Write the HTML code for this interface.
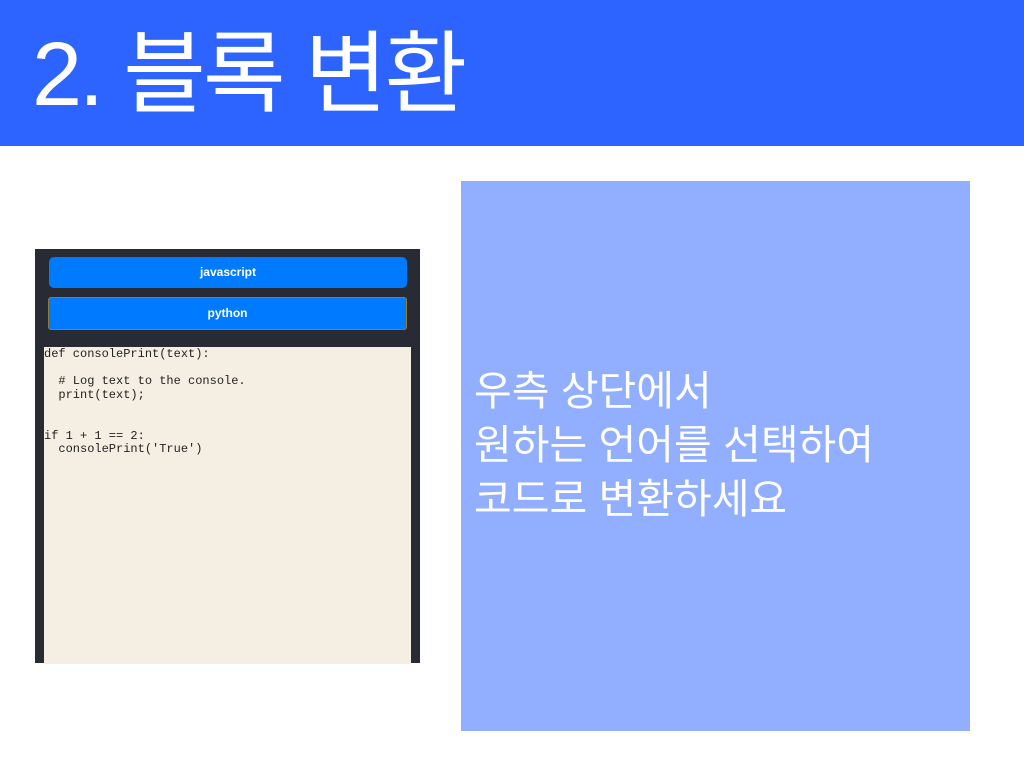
<!DOCTYPE html><html><head><meta charset="utf-8"><style>
body{margin:0;width:1024px;height:768px;position:relative;background:#fff;overflow:hidden;font-family:"Liberation Sans","Noto Sans CJK KR",sans-serif}
.hdr{position:absolute;left:0;top:0;width:1024px;height:146px;background:#2d63ff}
.t{position:absolute;left:32px;top:20px;color:#fff;font-size:90px;line-height:110px;letter-spacing:-3px;font-weight:400}
.panel{position:absolute;left:35px;top:249px;width:385px;height:414px;background:#282b33}
.btn{position:absolute;background:#007bff;color:#fff;font-size:12px;font-weight:bold;text-align:center;border-radius:5px;box-sizing:border-box}
.code{position:absolute;left:9px;top:98px;width:367px;height:316px;background:#f5efe3;font-family:"Liberation Mono",monospace;font-size:12px;line-height:13.6px;color:#222;white-space:pre;padding-top:1px}
.r{position:absolute;left:461px;top:181px;width:509px;height:550px;background:#92aeff}
.rt{position:absolute;left:13px;top:183px;color:#fff;font-size:41px;line-height:54px;letter-spacing:0px}
</style></head><body>
<div class="hdr"><div class="t">2. 블록 변환</div></div>
<div class="panel">
<div class="btn" style="left:14px;top:8px;width:358px;height:31px;line-height:31px">javascript</div>
<div class="btn" style="left:13px;top:48px;width:359px;height:33px;line-height:31px;border:1px solid #9a7a30;border-radius:3px">python</div>
<div class="code">def consolePrint(text):

  # Log text to the console.
  print(text);


if 1 + 1 == 2:
  consolePrint('True')</div>
</div>
<div class="r"><div class="rt">우측 상단에서<br>원하는 언어를 선택하여<br>코드로 변환하세요</div></div>
</body></html>
